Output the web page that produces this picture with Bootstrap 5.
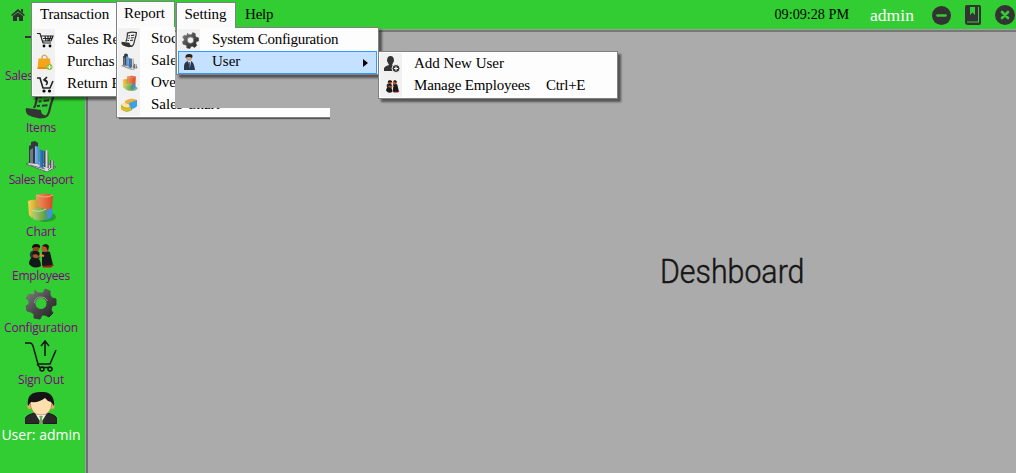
<!DOCTYPE html>
<html lang="en">
<head>
<meta charset="utf-8">
<title>Deshboard</title>
<link href="https://cdn.jsdelivr.net/npm/bootstrap@5.3.0/dist/css/bootstrap.min.css" rel="stylesheet">
<script src="https://cdn.jsdelivr.net/npm/bootstrap@5.3.0/dist/js/bootstrap.bundle.min.js"></script>
<style>
body{height:473px;background:#ababab;overflow:hidden;font-family:"Liberation Serif",serif;font-size:15px;line-height:22px;color:#000}
.topbar{height:30px;background:#32cd32;flex:none}
.topbar svg,.side svg{display:block}
.side{width:86px;background:#32cd32;flex:none;font-family:"Open Sans",sans-serif;font-size:12px;line-height:16px;color:#800080;padding-top:6px}
.work{border-left:2px solid #6f6f6f;border-top:2px solid #777;outline:1px solid #a0a0a0}
.side .tool{height:52px;white-space:nowrap;width:82px;letter-spacing:-.2px}
.side .tool svg{width:32px;height:32px;flex:none}
.side .short{height:44px}
.side .short svg{height:24px}
.side .who{font-size:14px;color:#fff;line-height:20px;width:82px;letter-spacing:0;padding-top:1px}
.title{font-family:Roboto,"Liberation Sans",sans-serif;font-weight:300;font-size:33.500px;line-height:40px;color:#151515;-webkit-text-stroke:.5px #151515;transform:scaleX(.905);transform-origin:0 0}
.tab-head{position:absolute;background:#fbfbfb;border:1px solid #808080;border-bottom:0;height:27px;line-height:24px;text-align:center;z-index:6}
.drop{position:absolute;background:#fdfdfd;border:1px solid #808080;box-shadow:3px 3px 2px rgba(0,0,0,.5);padding:1px;white-space:nowrap}
.entry{height:22px;line-height:21px}
.entry .ico{width:22px;height:22px;background:#f1f1f1;padding:3px 1px 3px 4px;margin-right:12px;flex:none}
.entry .ico svg{display:block;width:17px;height:17px}
.hot{background:#c4e1ff;outline:1px solid #3399ff;outline-offset:-1px}
.hot .ico{background:none}
.report-drop{clip-path:polygon(0 0,59px 0,59px 82px,214px 82px,214px 96px,0 96px)}
.report-drop .ico{margin-right:11px;padding-left:3px}
</style>
</head>
<body class="d-flex flex-column position-relative">
<svg width="0" height="0" class="position-absolute">
<defs>
<linearGradient id="steel"><stop stop-color="#222"/><stop offset=".5" stop-color="#d5d9dd"/><stop offset="1" stop-color="#444"/></linearGradient>
<linearGradient id="blue"><stop stop-color="#78bbf5"/><stop offset="1" stop-color="#1556a8"/></linearGradient>
<linearGradient id="metal" x2="1" y2="1"><stop stop-color="#858585"/><stop offset=".5" stop-color="#484848"/><stop offset="1" stop-color="#202020"/></linearGradient>
<linearGradient id="red"><stop stop-color="#eb9a62"/><stop offset="1" stop-color="#d84624"/></linearGradient>
<linearGradient id="gold"><stop stop-color="#f5d65a"/><stop offset="1" stop-color="#c69b2c"/></linearGradient>
<linearGradient id="leaf"><stop stop-color="#b4cf72"/><stop offset="1" stop-color="#56973f"/></linearGradient>
<symbol id="receipt" viewBox="0 0 32 32"><path d="M9 20Q12 15 12 4Q20 1 29 3Q29 8 26 16L24 24Q22 30 17 29" fill="none" stroke="#333" stroke-width="2.200"/><path d="M1 20L16 22Q16 27 20 27Q18 31 15 30.500Q9 30 3 27Q0 24 1 20Z" fill="#333"/><path d="M14 9l3-.3M19 8.500l6-.7M13.500 13.500l3-.3M18.500 13l5.500-.7M12 18l3-.2M17 17.800l5.500-.6" stroke="#333" stroke-width="2"/></symbol>
<symbol id="bars" viewBox="0 0 32 32"><path d="M1 24L11 20L31 27L22 32Z" fill="#d9dde2" stroke="#555" stroke-width=".8"/><path d="M5 25l15 4M10 22l14 6M23 30l5-5" stroke="#777"/><path d="M4 6l2-1 0-3 4-1 3 2v21l-9-1z" fill="#34383e"/><path d="M5 10l3-2v15H5z" fill="#737980"/><path d="M10 6l4 1v18l-4-2zM14.500 9l4 2v17l-4-1z" fill="url(#blue)"/><path d="M19 11l4-1 1 18-5-1z" fill="url(#steel)"/><path d="M25 20l4 1v8l-4-1z" fill="url(#steel)"/></symbol>
<symbol id="pie" viewBox="0 0 32 32"><ellipse cx="20" cy="25" rx="11" ry="5" fill="#1c6c20" opacity=".5"/><path d="M11 3Q20 0 28 3L27 18L23 20L11 14Z" fill="url(#red)"/><path d="M11 3Q20 7 28 3" stroke="#f2ad8b" fill="none"/><path d="M3 9Q7 7 13 8L13 16L7 26L4 23Z" fill="url(#gold)"/><path d="M20 19L27 16Q28 21 27 24Q25 28 19 28Z" fill="#3f91d8"/><path d="M7 18Q14 14 21 17L22 26Q15 31 8 27Z" fill="url(#leaf)"/><path d="M7 18Q14 21 21 17" fill="none" stroke="#c6dea5"/></symbol>
<symbol id="people" viewBox="0 0 32 24"><path d="M5 12Q4 6 11 6L15 14L8 18Z" fill="#263346"/><circle cx="11" cy="4" r="3.500" fill="#8b4520"/><path d="M7 4q0-4 4-4 5 0 4 4-3-2-8 0" fill="#111"/><path d="M17 8Q20 6 25 8L28 21Q22 24 17 21Z" fill="#17181b"/><path d="M17 21q7-3 12 0l-3 2.500H18z" fill="#a81515"/><path d="M17 17l9 1 1 3-9 1z" fill="#17181b"/><circle cx="20" cy="4.500" r="3.600" fill="#b35b25"/><path d="M17 2q4-4 7 0l-1 5-2-4z" fill="#251310"/><path d="M4 20Q4 13 10 13q6 1 6 9-7 4-12-2" fill="#161719"/><circle cx="11" cy="11" r="3.200" fill="#aa5425"/><path d="M7 11q1-5 5-4 4 1 2 5l-3-2z" fill="#221310"/><path d="M15 11l4 1" stroke="#e08a3b" stroke-width="2"/></symbol>
<symbol id="gear" viewBox="0 0 32 32"><path fill="url(#metal)" stroke="url(#metal)" stroke-linejoin="round" fill-rule="evenodd" d="M10 2L13 5L18 5L20 1L25 3L25 7L27 10L31 11L31 17L27 18L26 22L28 25L24 29L20 27L17 27L15 31L9 30L9 26L6 24L2 23L1 18L4 16L4 13L1 10L4 6L9 7ZM16 9.500A6 6 0 1 0 16 21.500A6 6 0 1 0 16 9.500Z"/><path d="M9.500 15Q10 9 16 9Q21 9 22.500 13" fill="none" stroke="#aaa" stroke-width=".8"/></symbol>
<symbol id="outcart" viewBox="0 0 32 32"><path d="M0 3H5Q7 3 8 6L13 24H25L31 10M20 16V2M16 6L20 1L24 6M12 24L15 27.500H26" fill="none" stroke="#151515" stroke-width="1.500"/><circle cx="17" cy="29" r="2" fill="none" stroke="#151515" stroke-width="1.500"/><circle cx="25" cy="29" r="2" fill="none" stroke="#151515" stroke-width="1.500"/></symbol>
<symbol id="man" viewBox="0 0 32 32"><path d="M0 32V27Q1 23 10 21H22Q31 23 32 27V32Z" fill="#292929" stroke="#111"/><path d="M10 21L16 31L22 21Z" fill="#f3f6f5"/><path d="M14 24h4l-1 2 1 6h-4l1-6z" fill="#6fab4f"/><ellipse cx="4.500" cy="14" rx="2" ry="3" fill="#edaa61"/><ellipse cx="27.500" cy="14" rx="2" ry="3" fill="#edaa61"/><path d="M5 10Q5 2 16 2Q27 2 27 11Q26 23 16 23Q6 23 5 10Z" fill="#ffdfae" stroke="#a66a2e" stroke-width=".6"/><path d="M3 14Q1 0 15 0Q30-1 29 14L26 10Q22 9 20 6Q14 11 6 10Z" fill="#151515"/></symbol>
<symbol id="cart" viewBox="0 0 17 17"><path d="M0 1.500H3L6 11H14M4 4H16L14 9H5.500M6 6.500H15M8 4L9 9M11 4V9M14 4L12 9" fill="none" stroke="#222" stroke-width="1.200"/><circle cx="7" cy="14" r="1.400"/><circle cx="13" cy="14" r="1.400"/></symbol>
<symbol id="retcart" viewBox="0 0 17 17"><path d="M0 2H3L6 12H13L16 5M9 9Q12 6 8 4M10 1L7 4L10 6" fill="none" stroke="#222" stroke-width="1.600"/><circle cx="7" cy="15" r="1.600"/><circle cx="12.500" cy="15" r="1.600"/></symbol>
<symbol id="bag" viewBox="0 0 17 17"><path d="M5 6V3Q7-1 10 3V6" fill="none" stroke="#c99a55" stroke-width="1.200"/><path d="M1.500 4.500H13L14 15H.5Z" fill="#f5a51a"/><path d="M.7 13h13v2H.5z" fill="#e98b0c"/><circle cx="12.500" cy="13" r="3" fill="#86c536"/><path d="M12.500 11v4M10.500 13h4" stroke="#fff"/></symbol>
<symbol id="disc" viewBox="0 0 17 17"><path d="M0 8q3-3 8-2l4 3-1 4q-6 4-11-1z" fill="#69b938"/><path d="M0 8q4-4 8-2l3 3q-6 4-11-1z" fill="#ffe39b"/><path d="M4 4q6-4 12-1v3l-7 2-5-2z" fill="#f3ac3a"/><path d="M8 6l8-3v6q-2 3-7 3z" fill="#3aa0e7"/><path d="M0 9q5 4 10 1v3q-6 3-10-1z" fill="#ecb324"/></symbol>
<symbol id="agent" viewBox="0 0 17 17"><path d="M2 16Q1 8 6 7H9Q12 8 13 16Z" fill="#29394b"/><path d="M6 7h3l-1 6z" fill="#eee"/><circle cx="7" cy="4" r="3" fill="#c7a58d"/><path d="M3.500 4Q3 0 7 0q5 0 3 4-3-2-6.500 0" fill="#252525"/><path d="M7.500 8v6" stroke="#336fa2"/></symbol>
<symbol id="adduser" viewBox="0 0 17 17"><path d="M5 9L3 5Q3 0 6.500 0Q10 0 10 5L8 9L12 11L10 15H0V12Q1 10 5 9" fill="#333"/><circle cx="12" cy="12.500" r="4" fill="#333" stroke="#f7f7f7"/><path d="M12 10.500v4M10 12.500h4" stroke="#fff" stroke-width="1.200"/></symbol>
</defs></svg>

<header class="topbar d-flex align-items-center">
  <svg style="margin-left:11px" width="14" height="14" viewBox="0 0 14 14"><path d="M0 7L7 1L14 7L12.800 8L7 3.500L1.200 8ZM10 1h2v4l-2-2zM2 8L7 4.500L12 8V13H8V9H6V13H2Z" fill="#303030"/></svg>
  <span style="margin-left:220px;margin-top:-2px;letter-spacing:-.2px">Help</span>
  <span class="ms-auto" style="margin-right:21px;margin-top:-2px;font-size:14.200px">09:09:28 PM</span>
  <span class="text-white" style="font-size:17.600px;margin-right:18px;line-height:20px">admin</span>
  <svg width="19" height="19" viewBox="0 0 19 19"><circle cx="9.500" cy="9.500" r="9.500" fill="#333"/><path d="M5.500 9.500h8" stroke="#32cd32" stroke-width="2.600" stroke-linecap="round"/></svg>
  <svg style="margin-left:14px" width="17" height="20" viewBox="0 0 17 20"><path d="M2 0H14Q16 0 16 2V18Q16 20 14 20H3Q0 20 0 17V2Q0 0 2 0Z" fill="#333"/><path d="M5 2h5v8L7.500 7.500L5 10zM2 16.500h11V2h1v15.500H2z" fill="#32cd32"/></svg>
  <svg style="margin-left:13px" width="21" height="20" viewBox="0 0 21 20"><circle cx="10" cy="10" r="10" fill="#333"/><path d="M7 7l6 6M13 7l-6 6" stroke="#32cd32" stroke-width="2.700" stroke-linecap="round"/></svg>
</header>

<div class="d-flex flex-grow-1">
  <nav class="side">
    <div class="tool d-flex flex-column"><svg class="align-self-center" viewBox="0 0 32 32"><path d="M0 0h10v2H0z" fill="#333"/></svg><span style="margin-left:5px">Sales</span></div>
    <div class="tool d-flex flex-column align-items-center"><svg><use href="#receipt"/></svg><span>Items</span></div>
    <div class="tool d-flex flex-column align-items-center"><svg><use href="#bars"/></svg><span style="letter-spacing:-.42px">Sales Report</span></div>
    <div class="tool d-flex flex-column align-items-center"><svg><use href="#pie"/></svg><span>Chart</span></div>
    <div class="tool short d-flex flex-column align-items-center"><svg><use href="#people"/></svg><span style="letter-spacing:-.3px">Employees</span></div>
    <div class="tool d-flex flex-column align-items-center"><svg><use href="#gear"/></svg><span>Configuration</span></div>
    <div class="tool d-flex flex-column align-items-center"><svg><use href="#outcart"/></svg><span>Sign Out</span></div>
    <div class="tool d-flex flex-column align-items-center"><svg><use href="#man"/></svg><span class="who text-center">User: admin</span></div>
  </nav>
  <main class="work flex-grow-1"><div style="padding:220px 0 0 572px"><div class="title"><span>Deshboard</span></div></div></main>
</div>

<div class="tab-head" style="left:31px;top:2px;width:86px;line-height:23px;text-indent:1px;letter-spacing:-.1px">Transaction</div>
<div class="drop" style="left:31px;top:27px;width:120px;height:70px;z-index:1">
  <div class="entry d-flex"><span class="ico"><svg><use href="#cart"/></svg></span>Sales Re</div>
  <div class="entry d-flex"><span class="ico"><svg><use href="#bag"/></svg></span>Purchas</div>
  <div class="entry d-flex"><span class="ico"><svg><use href="#retcart"/></svg></span>Return P</div>
</div>
<div class="tab-head" style="left:116px;top:1px;width:59px;height:26px;line-height:23px;text-indent:-2px">Report</div>
<div class="drop report-drop" style="left:116px;top:26px;width:214px;height:92px;z-index:2;border-right:0;box-shadow:2px 2px 1px -1px rgba(0,0,0,.5)">
  <div class="entry d-flex"><span class="ico"><svg><use href="#receipt"/></svg></span>Stoc</div>
  <div class="entry d-flex"><span class="ico"><svg><use href="#bars"/></svg></span>Sale</div>
  <div class="entry d-flex"><span class="ico"><svg><use href="#pie"/></svg></span>Ove</div>
  <div class="entry d-flex"><span class="ico"><svg><use href="#disc"/></svg></span>Sales Chart</div>
</div>
<div class="tab-head" style="left:176px;top:2px;width:60px;height:26px;line-height:23px;text-indent:-1px;letter-spacing:-.1px">Setting</div>
<div class="drop" style="left:176px;top:27px;width:203px;height:48px;z-index:5">
  <div class="entry d-flex" style="letter-spacing:-.3px"><span class="ico"><svg><use href="#gear"/></svg></span>System Configuration</div>
  <div class="entry hot d-flex" style="height:23px"><span class="ico"><svg><use href="#agent"/></svg></span>User<svg class="ms-auto" style="margin:8px 9px 0 0" width="5" height="8"><path d="M0 0L5 4L0 8Z"/></svg></div>
</div>
<div class="drop" style="left:378px;top:51px;width:240px;height:48px;z-index:7">
  <div class="entry d-flex"><span class="ico"><svg><use href="#adduser"/></svg></span>Add New User</div>
  <div class="entry d-flex"><span class="ico"><svg><use href="#people"/></svg></span><span style="letter-spacing:-.17px">Manage Employees</span><span style="margin-left:16px;letter-spacing:-.3px">Ctrl+E</span></div>
</div>
</body>
</html>
